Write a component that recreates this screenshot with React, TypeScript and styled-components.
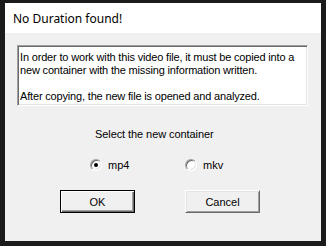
import styled, { createGlobalStyle } from "styled-components"

const GlobalStyle = createGlobalStyle`
  html, body {
    margin: 0;
    padding: 0;
    background: #1b1b1b;
  }
`

const Frame = styled.div`
  width: 326px;
  height: 246px;
  box-sizing: border-box;
  padding: 3px 5px 5px 5px;
  background: #1b1b1b;
  display: flex;
  flex-direction: column;
`

const TitleBar = styled.div`
  height: 30px;
  flex: none;
  background: #ffffff;
  display: flex;
  align-items: center;
  padding-left: 8px;
  font-family: "Noto Sans", sans-serif;
  font-size: 12px;
  color: #000000;
`

const Content = styled.div`
  flex: 1;
  background: #f0f0f0;
  display: flex;
  flex-direction: column;
  padding: 12px 0 0 12px;
  font-family: "Liberation Sans", Arial, sans-serif;
  font-size: 11px;
  color: #000000;
`

const MessageBox = styled.div`
  width: 291px;
  height: 61px;
  box-sizing: border-box;
  background: #ffffff;
  border-style: solid;
  border-width: 1px;
  border-color: #a0a0a0 #ffffff #ffffff #a0a0a0;
  box-shadow: inset 1px 1px 0 #696969, inset -1px -1px 0 #e3e3e3;
  padding: 5px 3px 0 2px;
  line-height: 13px;
  letter-spacing: -0.17px;
`

const Line = styled.div<{ $gap?: boolean }>`
  margin-top: ${(p) => (p.$gap ? "13px" : "0")};
  white-space: nowrap;
`

const Prompt = styled.div`
  margin: 22px 0 0 78px;
  line-height: 13px;
  letter-spacing: -0.08px;
`

const RadioRow = styled.div`
  display: flex;
  margin: 17px 0 0 73px;
`

const RadioLabel = styled.label`
  display: flex;
  align-items: center;
  width: 95px;
  height: 13px;
`

const RadioCircle = styled.span<{ $checked?: boolean }>`
  position: relative;
  width: 12px;
  height: 12px;
  box-sizing: border-box;
  border-radius: 50%;
  border: 1px solid;
  border-color: #a0a0a0 #ffffff #ffffff #a0a0a0;
  box-shadow: inset 1px 1px 0 #696969, inset -1px -1px 0 #e3e3e3;
  background: #ffffff;
  margin-right: 6px;

  &::after {
    content: "";
    display: ${(p) => (p.$checked ? "block" : "none")};
    position: absolute;
    left: 3px;
    top: 3px;
    width: 4px;
    height: 4px;
    border-radius: 50%;
    background: #000000;
  }
`

const ButtonRow = styled.div`
  display: flex;
  margin: 19px 0 0 43px;
  gap: 50px;
`

const Button = styled.button<{ $default?: boolean }>`
  width: 75px;
  height: 23px;
  box-sizing: border-box;
  padding: 0;
  font-family: "Liberation Sans", Arial, sans-serif;
  font-size: 11px;
  color: #000000;
  background: #f0f0f0;
  border: 1px solid;
  border-color: ${(p) =>
    p.$default ? "#000000" : "#ffffff #696969 #696969 #ffffff"};
  box-shadow: ${(p) =>
    p.$default
      ? "inset 1px 1px 0 #ffffff, inset -1px -1px 0 #696969, inset -2px -2px 0 #a0a0a0"
      : "inset 1px 1px 0 #e3e3e3, inset -1px -1px 0 #a0a0a0"};
`

const App = () => {
  return (
    <Frame>
      <GlobalStyle />
      <TitleBar>No Duration found!</TitleBar>
      <Content>
        <MessageBox>
          <Line>In order to work with this video file, it must be copied into a</Line>
          <Line>new container with the missing information written.</Line>
          <Line $gap>After copying, the new file is opened and analyzed.</Line>
        </MessageBox>
        <Prompt>Select the new container</Prompt>
        <RadioRow>
          <RadioLabel>
            <RadioCircle $checked />
            mp4
          </RadioLabel>
          <RadioLabel>
            <RadioCircle />
            mkv
          </RadioLabel>
        </RadioRow>
        <ButtonRow>
          <Button $default>OK</Button>
          <Button>Cancel</Button>
        </ButtonRow>
      </Content>
    </Frame>
  )
}

export default App
